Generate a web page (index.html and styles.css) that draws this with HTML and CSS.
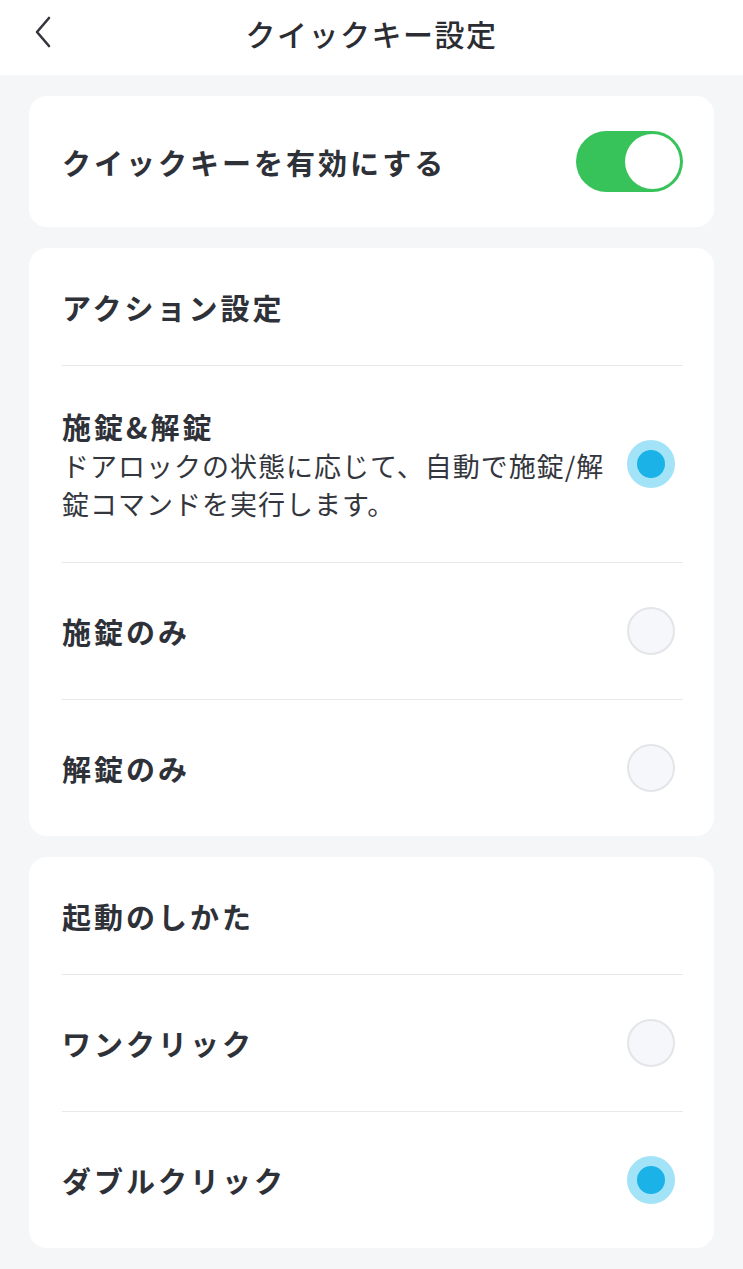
FILE: index.html
```html
<!DOCTYPE html>
<html lang="ja">
  <head>
    <meta charset="UTF-8" />
    <title>クイックキー設定</title>
    <link rel="stylesheet" href="styles.css">
  </head>
  <body>
    <!-- HEADER -->
    <div class="header">
      <span class="back">
        <svg width="22" height="34" viewBox="0 0 22 34">
          <path d="M17 3 L5 17 L17 31" fill="none" stroke="#34363c" stroke-width="2.6" stroke-linecap="round" stroke-linejoin="round" />
        </svg>
      </span>
      <h1>クイックキー設定</h1>
    </div>

    <div class="content">
      <!-- ENABLE -->
      <div class="card card-switch">
        <span class="label">クイックキーを有効にする</span>
        <span class="toggle on"><span class="knob"></span></span>
      </div>

      <!-- ACTION -->
      <div class="card">
        <div class="section-title">アクション設定</div>
        <div class="row row-tall">
          <div class="row-text">
            <div class="label">施錠&amp;解錠</div>
            <div class="desc">ドアロックの状態に応じて、自動で施錠/解錠コマンドを実行します。</div>
          </div>
          <span class="radio checked"></span>
        </div>
        <div class="row">
          <span class="label">施錠のみ</span>
          <span class="radio"></span>
        </div>
        <div class="row">
          <span class="label">解錠のみ</span>
          <span class="radio"></span>
        </div>
      </div>

      <!-- TRIGGER -->
      <div class="card">
        <div class="section-title">起動のしかた</div>
        <div class="row">
          <span class="label">ワンクリック</span>
          <span class="radio"></span>
        </div>
        <div class="row">
          <span class="label">ダブルクリック</span>
          <span class="radio checked"></span>
        </div>
      </div>
    </div>
  </body>
</html>
```

FILE: styles.css
```css
body {
  margin: 0;
  background: #f5f6f8;
  font-family: "Noto Sans CJK JP", "Noto Sans", sans-serif;
  color: #2f3138;
}
.header {
  height: 75px;
  background: #fff;
  display: flex;
  align-items: center;
  justify-content: center;
  position: relative;
}
.header h1 {
  margin: 0 0 10px;
  font-size: 30px;
  font-weight: 500;
  letter-spacing: 1.5px;
  color: #2b2d33;
}
.back {
  position: absolute;
  left: 32px;
  top: 15px;
}
.content {
  padding: 21px 29px 23px;
  display: flex;
  flex-direction: column;
  gap: 21px;
}
.card {
  background: #fff;
  border-radius: 18px;
  padding: 0 31px 0 33px;
}
.card-switch {
  height: 131px;
  display: flex;
  align-items: center;
  justify-content: space-between;
}
.label {
  font-size: 29px;
  font-weight: 700;
  letter-spacing: 3px;
  line-height: 42px;
}
.section-title {
  height: 117px;
  display: flex;
  align-items: center;
  font-size: 29px;
  font-weight: 700;
  letter-spacing: 3px;
  border-bottom: 1px solid #e7e8eb;
}
.row {
  height: 136px;
  display: flex;
  align-items: center;
  justify-content: space-between;
  border-bottom: 1px solid #e7e8eb;
}
.row:last-child {
  border-bottom: none;
}
.row-tall {
  height: 196px;
}
.row-text {
  width: 552px;
}
.desc {
  font-size: 27px;
  letter-spacing: 1px;
  line-height: 38px;
  color: #34363d;
}
.toggle {
  width: 107px;
  height: 61px;
  border-radius: 31px;
  background: #37c35a;
  padding: 3px;
  box-sizing: border-box;
  display: flex;
  justify-content: flex-end;
}
.knob {
  width: 55px;
  height: 55px;
  border-radius: 50%;
  background: #fff;
}
.radio {
  width: 48px;
  height: 48px;
  border-radius: 50%;
  box-sizing: border-box;
  background: #f6f7fa;
  border: 2px solid #e4e5e9;
  margin-right: 8px;
  flex-shrink: 0;
}
.radio.checked {
  background: #1bb2e8;
  border: 10px solid #a3e3f8;
}
```
